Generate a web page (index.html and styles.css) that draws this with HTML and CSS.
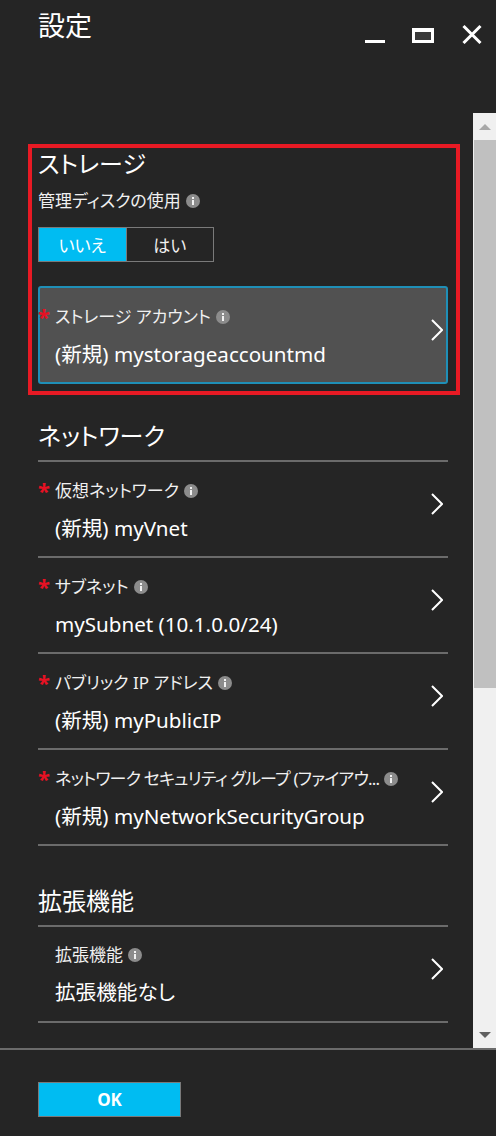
FILE: index.html
```html
<!DOCTYPE html>
<html lang="ja">
<head>
<meta charset="utf-8">
<title>設定</title>
<link rel="stylesheet" href="styles.css">
</head>
<body>
<div class="blade">
  <header class="blade-header">
    <div class="blade-title">設定</div>
    <div class="win-controls">
      <svg class="wc" width="22" height="20" viewBox="0 0 22 20"><rect x="1" y="16" width="20" height="3" fill="#fff"/></svg>
      <svg class="wc" width="22" height="20" viewBox="0 0 22 20"><rect x="0" y="4" width="22" height="15" fill="#fff"/><rect x="3" y="8" width="16" height="8" fill="#3a3a3a"/></svg>
      <svg class="wc wc-close" width="22" height="20" viewBox="0 0 22 20"><path d="M2.5 2 L19.5 19 M19.5 2 L2.5 19" stroke="#fff" stroke-width="3"/></svg>
    </div>
  </header>

  <div class="blade-main">
    <div class="blade-content">
      <div class="highlight">
        <h2 class="section-title">ストレージ</h2>
        <div class="plain-label">管理ディスクの使用<span class="info"><svg width="14" height="14" viewBox="0 0 14 14"><circle cx="7" cy="7" r="7" fill="#8c8c8c"/><rect x="6" y="6" width="2" height="5" fill="#f2f2f2"/><rect x="6" y="3" width="2" height="2" fill="#f2f2f2"/></svg></span></div>
        <div class="toggle">
          <div class="toggle-opt is-on">いいえ</div>
          <div class="toggle-opt">はい</div>
        </div>
        <div class="field field-card">
          <div class="field-body">
            <div class="field-label"><span class="req">*</span>ストレージ アカウント<span class="info"><svg width="14" height="14" viewBox="0 0 14 14"><circle cx="7" cy="7" r="7" fill="#8c8c8c"/><rect x="6" y="6" width="2" height="5" fill="#f2f2f2"/><rect x="6" y="3" width="2" height="2" fill="#f2f2f2"/></svg></span></div>
            <div class="field-value">(新規) mystorageaccountmd</div>
          </div>
          <svg class="chev" width="12" height="22" viewBox="0 0 12 22"><path d="M1 1 L11 11 L1 21" fill="none" stroke="#fff" stroke-width="2"/></svg>
        </div>
      </div>

      <section class="section">
        <h2 class="section-title ruled">ネットワーク</h2>
        <div class="field">
          <div class="field-body">
            <div class="field-label"><span class="req">*</span>仮想ネットワーク<span class="info"><svg width="14" height="14" viewBox="0 0 14 14"><circle cx="7" cy="7" r="7" fill="#8c8c8c"/><rect x="6" y="6" width="2" height="5" fill="#f2f2f2"/><rect x="6" y="3" width="2" height="2" fill="#f2f2f2"/></svg></span></div>
            <div class="field-value">(新規) myVnet</div>
          </div>
          <svg class="chev" width="12" height="22" viewBox="0 0 12 22"><path d="M1 1 L11 11 L1 21" fill="none" stroke="#fff" stroke-width="2"/></svg>
        </div>
        <div class="field">
          <div class="field-body">
            <div class="field-label"><span class="req">*</span>サブネット<span class="info"><svg width="14" height="14" viewBox="0 0 14 14"><circle cx="7" cy="7" r="7" fill="#8c8c8c"/><rect x="6" y="6" width="2" height="5" fill="#f2f2f2"/><rect x="6" y="3" width="2" height="2" fill="#f2f2f2"/></svg></span></div>
            <div class="field-value">mySubnet (10.1.0.0/24)</div>
          </div>
          <svg class="chev" width="12" height="22" viewBox="0 0 12 22"><path d="M1 1 L11 11 L1 21" fill="none" stroke="#fff" stroke-width="2"/></svg>
        </div>
        <div class="field">
          <div class="field-body">
            <div class="field-label"><span class="req">*</span>パブリック IP アドレス<span class="info"><svg width="14" height="14" viewBox="0 0 14 14"><circle cx="7" cy="7" r="7" fill="#8c8c8c"/><rect x="6" y="6" width="2" height="5" fill="#f2f2f2"/><rect x="6" y="3" width="2" height="2" fill="#f2f2f2"/></svg></span></div>
            <div class="field-value">(新規) myPublicIP</div>
          </div>
          <svg class="chev" width="12" height="22" viewBox="0 0 12 22"><path d="M1 1 L11 11 L1 21" fill="none" stroke="#fff" stroke-width="2"/></svg>
        </div>
        <div class="field">
          <div class="field-body">
            <div class="field-label"><span class="req">*</span><span class="tight">ネットワーク セキュリティ グループ (ファイアウ...</span><span class="info"><svg width="14" height="14" viewBox="0 0 14 14"><circle cx="7" cy="7" r="7" fill="#8c8c8c"/><rect x="6" y="6" width="2" height="5" fill="#f2f2f2"/><rect x="6" y="3" width="2" height="2" fill="#f2f2f2"/></svg></span></div>
            <div class="field-value">(新規) myNetworkSecurityGroup</div>
          </div>
          <svg class="chev" width="12" height="22" viewBox="0 0 12 22"><path d="M1 1 L11 11 L1 21" fill="none" stroke="#fff" stroke-width="2"/></svg>
        </div>
      </section>

      <section class="section section-ext">
        <h2 class="section-title ruled">拡張機能</h2>
        <div class="field">
          <div class="field-body">
            <div class="field-label"><span class="req"></span>拡張機能<span class="info"><svg width="14" height="14" viewBox="0 0 14 14"><circle cx="7" cy="7" r="7" fill="#8c8c8c"/><rect x="6" y="6" width="2" height="5" fill="#f2f2f2"/><rect x="6" y="3" width="2" height="2" fill="#f2f2f2"/></svg></span></div>
            <div class="field-value">拡張機能なし</div>
          </div>
          <svg class="chev" width="12" height="22" viewBox="0 0 12 22"><path d="M1 1 L11 11 L1 21" fill="none" stroke="#fff" stroke-width="2"/></svg>
        </div>
      </section>
    </div>

    <div class="scrollbar">
      <div class="sb-btn"><svg width="12" height="6" viewBox="0 0 12 6"><path d="M0 6 L6 0 L12 6 Z" fill="#a8a8a8"/></svg></div>
      <div class="sb-thumb"></div>
      <div class="sb-track"></div>
      <div class="sb-btn"><svg width="12" height="6" viewBox="0 0 12 6"><path d="M0 0 L12 0 L6 6 Z" fill="#606060"/></svg></div>
    </div>
  </div>

  <footer class="blade-footer">
    <button class="btn-ok">OK</button>
  </footer>
</div>
</body>
</html>
```

FILE: styles.css
```css
* { box-sizing: border-box; }

html, body {
  margin: 0;
  padding: 0;
  background: #252525;
}

body {
  width: 496px;
  height: 1136px;
  overflow: hidden;
  color: #fff;
  font-family: "Noto Sans", "Noto Sans CJK JP", sans-serif;
  font-feature-settings: "palt";
}

.blade {
  display: flex;
  flex-direction: column;
  height: 1136px;
}

.blade-header {
  height: 113px;
  display: flex;
  justify-content: space-between;
  align-items: flex-start;
  padding: 8px 13px 0 38px;
}

.blade-title {
  font-size: 27px;
  line-height: 36px;
}

.win-controls {
  display: flex;
  gap: 26px;
  margin-top: 16px;
}

.wc { display: block; }
.wc-close { margin-left: 1px; }

.blade-main {
  display: flex;
  height: 935px;
}

.blade-content {
  flex: 1;
  overflow: hidden;
  padding-top: 31px;
}

.highlight {
  margin-left: 28px;
  width: 432px;
  border: 4px solid #e81a24;
  padding: 1px 8px 7px 6px;
}

.section-title {
  margin: 0;
  font-weight: normal;
  font-size: 24px;
  line-height: 30px;
}

.section-title.ruled {
  padding-bottom: 9px;
  border-bottom: 2px solid #6b6b6b;
}

.plain-label {
  display: flex;
  align-items: center;
  margin-top: 10px;
  font-size: 17px;
  line-height: 24px;
  color: #f0f0f0;
}

.info {
  display: inline-flex;
  flex: none;
  margin-left: 5px;
}

.toggle {
  display: flex;
  width: 176px;
  height: 35px;
  margin-top: 14px;
  border: 1px solid #7a7a7a;
}

.toggle-opt {
  flex: 1;
  display: flex;
  align-items: center;
  justify-content: center;
  font-size: 17px;
  color: #f0f0f0;
}

.toggle-opt + .toggle-opt {
  border-left: 1px solid #7a7a7a;
}

.toggle-opt.is-on {
  background: #00bcf2;
  color: #fff;
}

.section {
  margin-left: 38px;
  width: 410px;
  margin-top: 26px;
}

.section-ext {
  margin-top: 40px;
}

.field {
  display: flex;
  height: 96px;
  padding: 16px 0 14px;
  border-bottom: 2px solid #6b6b6b;
}

.field-card {
  margin-top: 24px;
  height: 98px;
  background: #515151;
  border: 2px solid #1f8fb7;
  border-radius: 3px;
}

.field-card .field-body {
  margin-left: -2px;
}

.field-body {
  flex: 1;
  min-width: 0;
}

.field-label {
  display: flex;
  align-items: center;
  font-size: 17px;
  line-height: 24px;
  color: #f0f0f0;
  white-space: nowrap;
}

.tight {
  letter-spacing: -0.8px;
}

.req {
  width: 17px;
  flex: none;
  align-self: flex-start;
  color: #e81123;
  font-size: 22px;
  line-height: 25px;
  font-weight: bold;
}

.field-value {
  margin-top: 10px;
  padding-left: 17px;
  font-size: 20.6px;
  line-height: 30px;
  white-space: nowrap;
}

.chev {
  flex: none;
  margin: 15px 5px 0 8px;
}

.field-card .chev {
  margin-right: 3px;
}

.scrollbar {
  width: 23px;
  flex: none;
  background: #f0f0f0;
  display: flex;
  flex-direction: column;
}

.sb-btn {
  height: 27px;
  display: flex;
  align-items: center;
  justify-content: center;
  padding-left: 1px;
}

.sb-thumb {
  height: 548px;
  margin-left: 1px;
  background: #c0c0c0;
}

.sb-track { flex: 1; }

.blade-footer {
  flex: 1;
  border-top: 2px solid #6b6b6b;
  padding: 32px 0 0 38px;
}

.btn-ok {
  display: block;
  width: 143px;
  height: 35px;
  margin: 0;
  padding: 0;
  background: #00bcf2;
  border: 1px solid #7a7a7a;
  color: #fff;
  font-family: "Noto Sans", "Noto Sans CJK JP", sans-serif;
  font-size: 17px;
  font-weight: bold;
}
```
